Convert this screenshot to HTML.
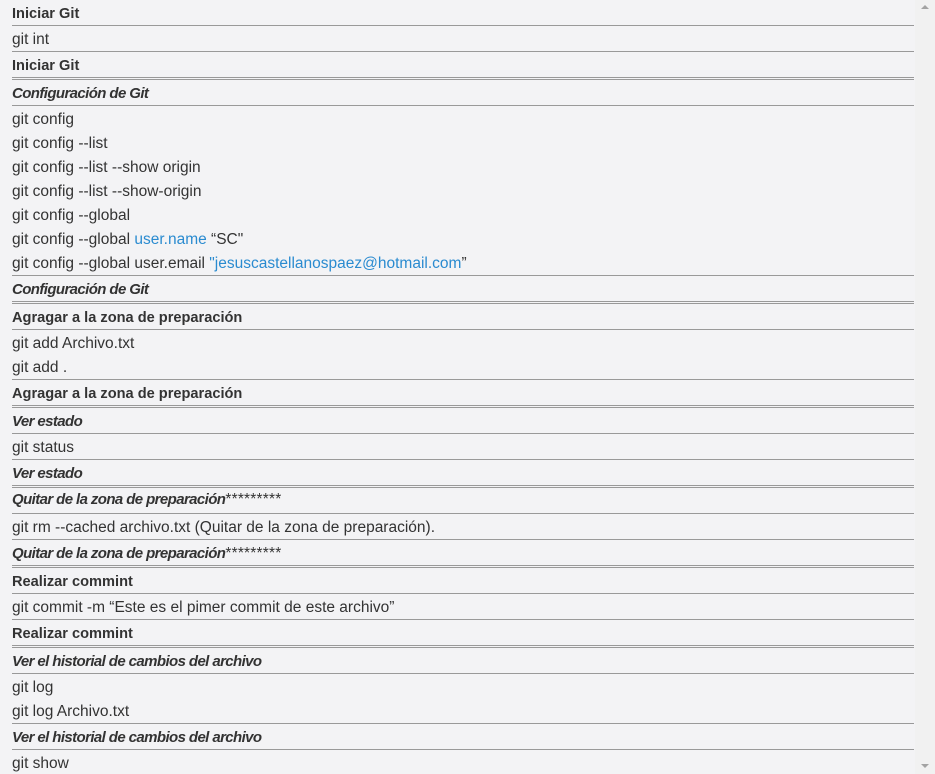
<!DOCTYPE html>
<html><head><meta charset="utf-8"><style>
html,body{margin:0;padding:0;}
body{width:935px;height:774px;background:#f3f3f5;position:relative;overflow:hidden;font-family:"Liberation Sans",sans-serif;font-size:15.5px;color:#333;}
.t{position:absolute;left:12px;height:20px;line-height:20px;white-space:nowrap;margin-top:1px;}
.b{font-weight:bold;font-size:14.6px;}
.bi{font-weight:bold;font-style:italic;font-size:15px;letter-spacing:-0.6px;}
.s{font-size:15.5px;letter-spacing:0.2px;}
.l{position:absolute;left:12px;width:902px;height:1px;background:#999;}
.a{color:#2a8bd0;}
.sb{position:absolute;left:915px;top:0;width:20px;height:774px;background:#f1f1f1;}
.up,.dn{position:absolute;left:921px;width:0;height:0;border-left:4px solid transparent;border-right:4px solid transparent;}
.up{top:5px;border-bottom:4px solid #a3a3a3;}
.dn{top:764px;border-top:4px solid #a3a3a3;}
</style></head><body>
<div class="sb"></div><div class="up"></div><div class="dn"></div>

<div class="t b" style="top:3px">Iniciar Git</div>
<div class="t" style="top:29px">git int</div>
<div class="t b" style="top:55px">Iniciar Git</div>
<div class="t bi" style="top:83px">Configuración de Git</div>
<div class="t" style="top:109px">git config</div>
<div class="t" style="top:133px">git config --list</div>
<div class="t" style="top:157px">git config --list --show origin</div>
<div class="t" style="top:181px">git config --list --show-origin</div>
<div class="t" style="top:205px">git config --global</div>
<div class="t" style="top:229px">git config --global <span class="a">user.name</span> “SC"</div>
<div class="t" style="top:253px">git config --global user.email <span class="a">"jesuscastellanospaez@hotmail.com</span>”</div>
<div class="t bi" style="top:279px">Configuración de Git</div>
<div class="t b" style="top:307px">Agragar a la zona de preparación</div>
<div class="t" style="top:333px">git add Archivo.txt</div>
<div class="t" style="top:357px">git add .</div>
<div class="t b" style="top:383px">Agragar a la zona de preparación</div>
<div class="t bi" style="top:411px">Ver estado</div>
<div class="t" style="top:437px">git status</div>
<div class="t bi" style="top:463px">Ver estado</div>
<div class="t" style="top:489px"><span class="bi">Quitar de la zona de preparación</span><span class="s">*********</span></div>
<div class="t" style="top:517px">git rm --cached archivo.txt (Quitar de la zona de preparación).</div>
<div class="t" style="top:543px"><span class="bi">Quitar de la zona de preparación</span><span class="s">*********</span></div>
<div class="t b" style="top:571px">Realizar commint</div>
<div class="t" style="top:597px">git commit -m “Este es el pimer commit de este archivo”</div>
<div class="t b" style="top:623px">Realizar commint</div>
<div class="t bi" style="top:651px">Ver el historial de cambios del archivo</div>
<div class="t" style="top:677px">git log</div>
<div class="t" style="top:701px">git log Archivo.txt</div>
<div class="t bi" style="top:727px">Ver el historial de cambios del archivo</div>
<div class="t" style="top:753px">git show</div>

<div class="l" style="top:25px"></div>
<div class="l" style="top:51px"></div>
<div class="l" style="top:77px"></div><div class="l" style="top:79px"></div>
<div class="l" style="top:105px"></div>
<div class="l" style="top:275px"></div>
<div class="l" style="top:301px"></div><div class="l" style="top:303px"></div>
<div class="l" style="top:329px"></div>
<div class="l" style="top:379px"></div>
<div class="l" style="top:405px"></div><div class="l" style="top:407px"></div>
<div class="l" style="top:433px"></div>
<div class="l" style="top:459px"></div>
<div class="l" style="top:485px"></div><div class="l" style="top:487px"></div>
<div class="l" style="top:513px"></div>
<div class="l" style="top:539px"></div>
<div class="l" style="top:565px"></div><div class="l" style="top:567px"></div>
<div class="l" style="top:593px"></div>
<div class="l" style="top:619px"></div>
<div class="l" style="top:645px"></div><div class="l" style="top:647px"></div>
<div class="l" style="top:673px"></div>
<div class="l" style="top:723px"></div>
<div class="l" style="top:749px"></div>
</body></html>
